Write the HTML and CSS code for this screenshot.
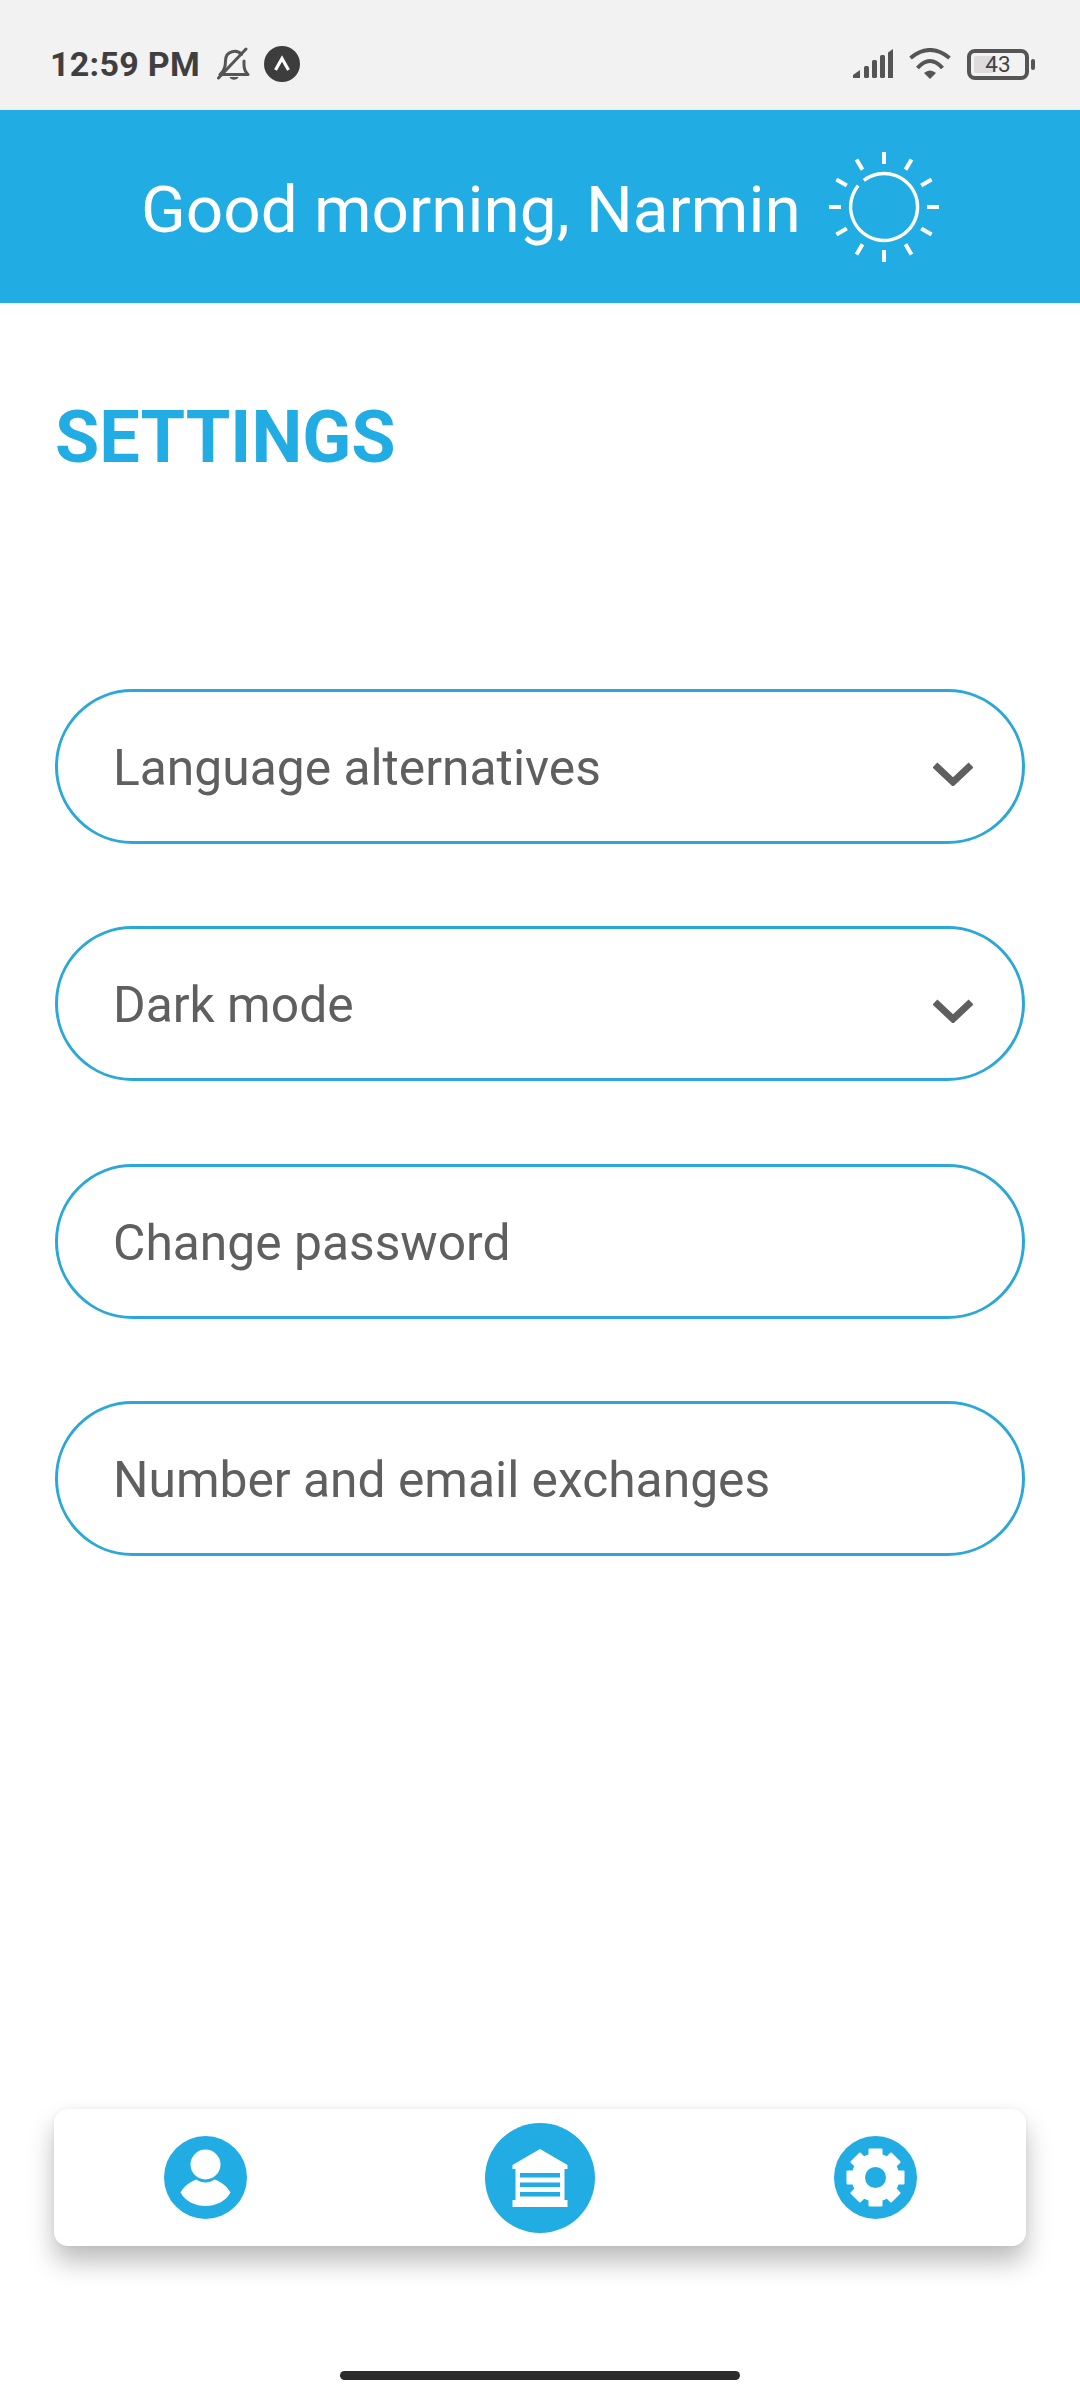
FILE: index.html
```html
<!DOCTYPE html>
<html lang="en">
<head>
<meta charset="utf-8">
<title>Settings</title>
<link rel="stylesheet" href="styles.css">
</head>
<body>
<div class="app">
  <div class="status">
    <div class="status-left">
      <span class="time">12:59 PM</span>
      <svg class="bell" width="34" height="34" viewBox="0 0 34 34" fill="none" stroke="#555" stroke-width="3" stroke-linecap="round" stroke-linejoin="round">
        <path d="M3 27.500h28c-2.500-2.500-4-5-4-9.500v-4M24.500 7.500C20.500 2.500 8.500 3 8.500 14c0 6-1 10-5.500 13.500"/>
        <path d="M1.500 31 29 2"/>
        <path d="M12.500 30c1 3.500 8 3.500 9 0z" fill="#555" stroke="none"/>
      </svg>
      <svg class="nav-badge" width="36" height="36" viewBox="0 0 36 36">
        <circle cx="18" cy="18" r="18" fill="#3d3d3d"/>
        <path d="M11.500 24 18 12.500 24.500 24" fill="none" stroke="#fff" stroke-width="3.200"/>
      </svg>
    </div>
    <div class="status-right">
      <svg width="40" height="30" viewBox="0 0 40 30" fill="#555">
        <path d="M0 29v-3l7-5v8z"/>
        <rect x="11" y="17" width="5" height="12" rx="1.500"/>
        <rect x="19" y="11" width="5" height="18" rx="1.500"/>
        <rect x="27" y="6" width="5" height="23" rx="1.500"/>
        <path d="M35 3.500 40 0v29h-5z"/>
      </svg>
      <svg width="42" height="32" viewBox="0 0 42 32" fill="none" stroke="#555" stroke-width="4">
        <path d="M1.500 10Q21-6 40.500 10"/>
        <path d="M8.500 20Q21 6 33.500 20"/>
        <path d="M21 31l-6-6Q21 20 27 25z" fill="#555" stroke="none"/>
      </svg>
      <div class="battery-wrap">
        <div class="battery"><span class="battery-fill"></span><span class="battery-num">43</span></div>
        <span class="battery-nub"></span>
      </div>
    </div>
  </div>

  <header class="header">
    <h1 class="greeting">Good morning, Narmin</h1>
    <svg class="sun" width="112" height="112" viewBox="-56 -56 112 112" fill="none" stroke="#fff" stroke-width="3.400">
      <path d="M-20.200 -26.700A33.500 33.500 0 1 1 -25.800 -21.300" />
      <g stroke-width="4">
        <path d="M0-43V-55M21.500-37.200 27.500-47.600M37.200-21.500 47.600-27.500M43 0H55M37.200 21.500 47.600 27.500M21.500 37.200 27.500 47.600M0 43V55M-21.500 37.200-27.500 47.600M-37.200 21.500-47.600 27.500M-43 0H-55M-37.200-21.500-47.600-27.500M-21.500-37.200-27.500-47.600"/>
      </g>
    </svg>
  </header>

  <main class="main">
    <h2 class="title">SETTINGS</h2>
    <div class="rows">
      <div class="row"><span>Language alternatives</span>
        <svg class="chev" width="40" height="24" viewBox="0 0 40 24" fill="none" stroke="#5f5f5f" stroke-width="7"><path d="M2 3 20 20 38 3"/></svg>
      </div>
      <div class="row"><span>Dark mode</span>
        <svg class="chev" width="40" height="24" viewBox="0 0 40 24" fill="none" stroke="#5f5f5f" stroke-width="7"><path d="M2 3 20 20 38 3"/></svg>
      </div>
      <div class="row"><span>Change password</span></div>
      <div class="row"><span>Number and email exchanges</span></div>
    </div>
  </main>

  <nav class="tabbar">
    <svg width="83" height="83" viewBox="-41.500 -41.500 83 83">
      <circle r="41.500" fill="#22ace4"/>
      <path d="M-25 15C-21 8-15 4-9 2-4 6 4 6 9 2 15 4 21 8 25 15 20 24 10 28.500 0 28.500S-20 24-25 15Z" fill="#fff"/>
      <circle cy="-13" r="15" fill="#fff"/>
    </svg>
    <svg width="110" height="110" viewBox="-55 -55 110 110">
      <circle r="55" fill="#22ace4"/>
      <path d="M0-29 27.500-13V-9H24.500V22H27.500V29H-27.500V22H-24.500V-9H-27.500V-13Z" fill="#fff"/>
      <g fill="#22ace4">
        <rect x="-20" y="-5" width="40" height="4.500"/>
        <rect x="-20" y="4.500" width="40" height="4.500"/>
        <rect x="-20" y="14" width="40" height="4.500"/>
      </g>
    </svg>
    <svg width="83" height="83" viewBox="-41.500 -41.500 83 83">
      <circle r="41.500" fill="#22ace4"/>
      <g fill="#fff">
        <circle r="24"/>
        <rect x="-7" y="-29" width="14" height="58" rx="1"/>
        <rect x="-7" y="-29" width="14" height="58" rx="1" transform="rotate(45)"/>
        <rect x="-7" y="-29" width="14" height="58" rx="1" transform="rotate(90)"/>
        <rect x="-7" y="-29" width="14" height="58" rx="1" transform="rotate(135)"/>
      </g>
      <circle r="10.500" fill="#22ace4"/>
    </svg>
  </nav>

  <div class="home-bar"></div>
</div>
</body>
</html>
```

FILE: styles.css
```css
* { box-sizing: border-box; }
html, body { margin: 0; padding: 0; background: #fff; }
body { font-family: Roboto, "Noto Sans", sans-serif; }
.app { width: 1080px; height: 2400px; display: flex; flex-direction: column; overflow: hidden; }

.status { height: 110px; background: #f2f2f2; display: flex; align-items: center; justify-content: space-between; padding: 18px 45px 0 50px; }
.status-left, .status-right { display: flex; align-items: center; }
.time { font-size: 34px; font-weight: 700; color: #3f3f3f; letter-spacing: .3px; margin-right: 17px; }
.bell { margin-right: 13px; }
.status-right { gap: 16px; }
.battery-wrap { display: flex; align-items: center; gap: 2px; }
.battery { position: relative; width: 62px; height: 31px; border: 4px solid #555; border-radius: 8px; display: flex; align-items: center; justify-content: center; }
.battery-fill { position: absolute; left: 3px; top: 3px; bottom: 3px; width: 20px; background: #dcdcdc; border-radius: 2px; }
.battery-num { position: relative; font-size: 22.500px; color: #444; line-height: 1; }
.battery-nub { width: 4px; height: 11px; background: #555; border-radius: 2px; }

.header { height: 193px; background: #22ace4; display: flex; align-items: center; padding-left: 141px; gap: 27px; }
.greeting { margin: 6px 0 0; font-size: 65.700px; font-weight: 400; color: #fff; white-space: nowrap; }
.sun { flex: none; }

.main { padding: 95px 55px 0; }
.title { margin: 0; font-size: 72px; font-weight: 700; color: #22ace4; line-height: 80px; }
.rows { display: flex; flex-direction: column; gap: 82.300px; margin-top: 211px; }
.row { height: 155px; border: 3px solid #2ba7d9; border-radius: 78px; display: flex; align-items: center; justify-content: space-between; padding: 0 49px 0 55px; font-size: 49.750px; color: #5f5f5f; background: #fff; }
.row span { margin-top: 3px; }
.chev { margin-top: 14px; }

.tabbar { margin: auto 54px 0; height: 137px; flex: none; background: #fff; border-radius: 14px; box-shadow: 0 16px 26px rgba(0,0,0,.26), 0 0 6px rgba(0,0,0,.05); display: flex; align-items: center; justify-content: space-between; padding: 0 109.500px; }
.home-bar { flex: none; width: 400px; height: 9px; border-radius: 5px; background: #2b2b2b; margin: 125px auto 20px; }
```
